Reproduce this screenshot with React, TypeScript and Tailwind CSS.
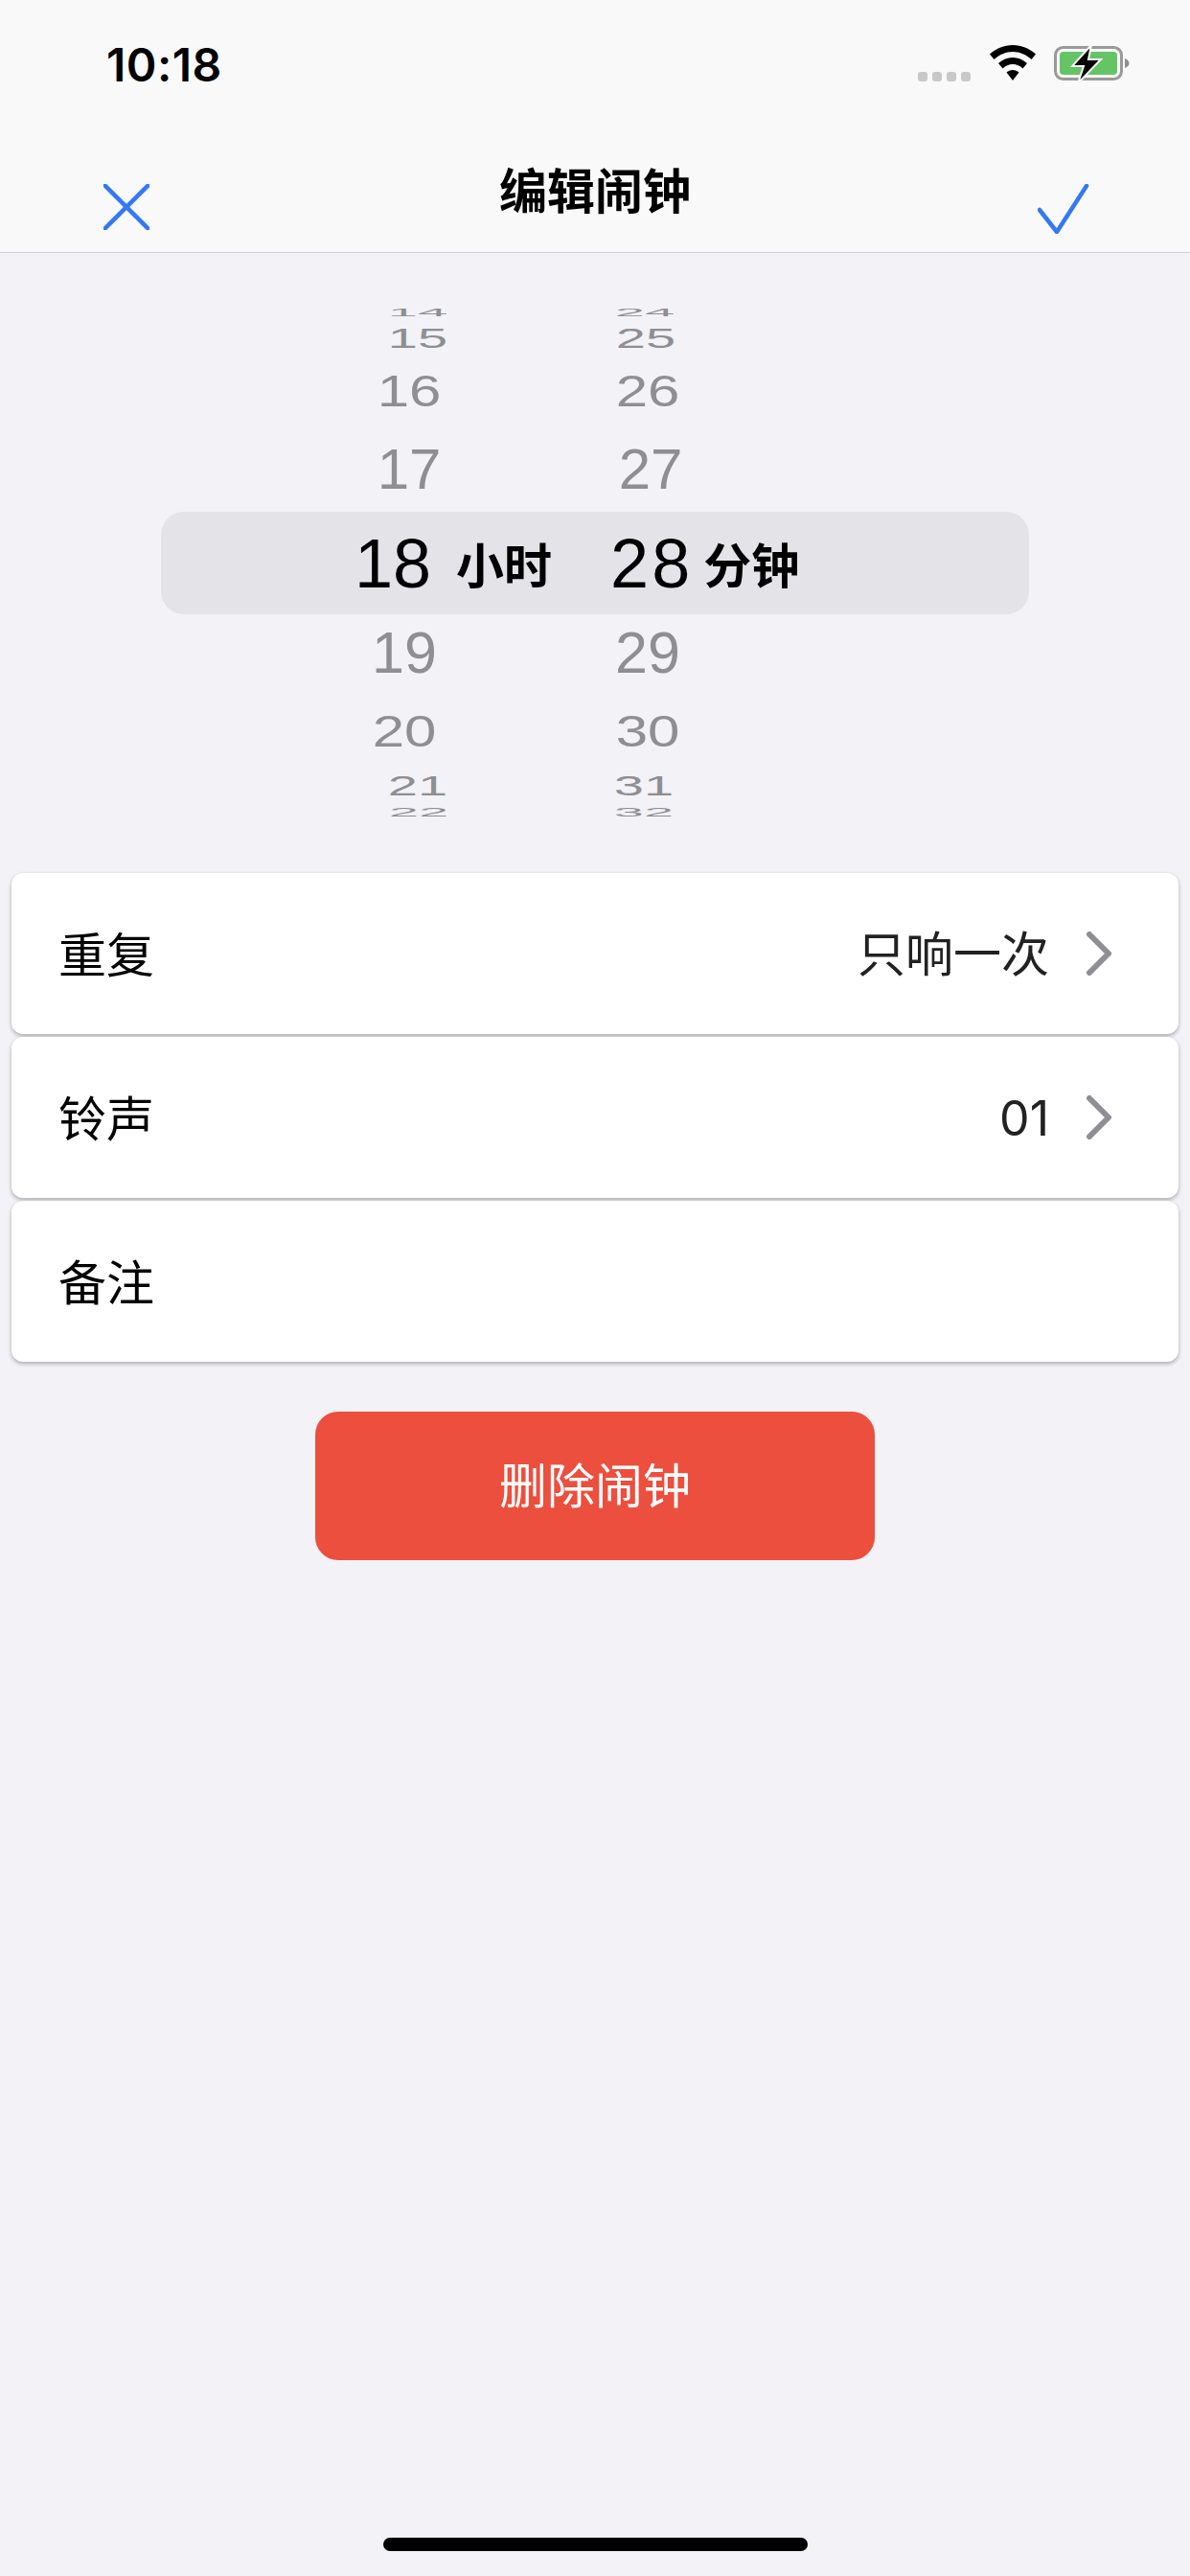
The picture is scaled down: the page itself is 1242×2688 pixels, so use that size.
const wheelRows = [
  { hour: '14', minute: '24', rowClass: 'h-[17px] overflow-hidden', hourClass: 'w-[76px] ml-[398px] scale-y-[0.2]', minuteClass: 'w-[76px] ml-[161px] scale-y-[0.2]', textClass: 'text-[56px]' },
  { hour: '15', minute: '25', rowClass: 'h-[37px]', hourClass: 'w-[76px] ml-[398px] scale-y-[0.52]', minuteClass: 'w-[76px] ml-[162px] scale-y-[0.52]', textClass: 'text-[56px]' },
  { hour: '16', minute: '26', rowClass: 'h-[74px]', hourClass: 'w-[76px] ml-[389px] scale-y-[0.78]', minuteClass: 'w-[76px] ml-[173px] scale-y-[0.78]', textClass: 'text-[60px]' },
  { hour: '17', minute: '27', rowClass: 'h-[89px]', hourClass: 'w-[76px] ml-[389px]', minuteClass: 'w-[76px] ml-[176px]', textClass: 'text-[60px]' },
]

const lowerRows = [
  { hour: '19', minute: '29', rowClass: 'h-[81px]', hourClass: 'w-[76px] ml-[384px]', minuteClass: 'w-[76px] ml-[178px]', textClass: 'text-[61px]' },
  { hour: '20', minute: '30', rowClass: 'h-[82px]', hourClass: 'w-[76px] ml-[384px] scale-y-[0.78]', minuteClass: 'w-[76px] ml-[178px] scale-y-[0.78]', textClass: 'text-[60px]' },
  { hour: '21', minute: '31', rowClass: 'h-[32px]', hourClass: 'w-[76px] ml-[398px] scale-y-[0.52]', minuteClass: 'w-[76px] ml-[160px] scale-y-[0.52]', textClass: 'text-[56px]' },
  { hour: '22', minute: '32', rowClass: 'h-[24px] overflow-hidden', hourClass: 'w-[76px] ml-[399px] scale-y-[0.22]', minuteClass: 'w-[76px] ml-[159px] scale-y-[0.22]', textClass: 'text-[56px]' },
]

type WheelRow = (typeof wheelRows)[number]

function Row({ row }: { row: WheelRow }) {
  return (
    <div className={`flex items-center text-[#8e8e93] font-['Liberation_Sans',sans-serif] leading-none ${row.rowClass} ${row.textClass}`}>
      <span className={`text-center shrink-0 ${row.hourClass}`}>{row.hour}</span>
      <span className={`text-center shrink-0 ${row.minuteClass}`}>{row.minute}</span>
    </div>
  )
}

function ChevronIcon() {
  return (
    <svg width="28" height="46" viewBox="0 0 28 46" fill="none" stroke="#8e8e93" strokeWidth="6" strokeLinecap="round" strokeLinejoin="round" className="mr-[-1px] -mt-[3px]">
      <path d="M4 3L24 23L4 43" />
    </svg>
  )
}

function SettingRow({ label, value }: { label: string; value?: string }) {
  return (
    <div className="h-[168px] mb-[3px] flex items-center pt-[3px] pl-[49px] pr-[70px] bg-white rounded-[12px] shadow-[0_2px_4px_rgba(0,0,0,0.3)]">
      <span className="text-black">{label}</span>
      {value && <span className="ml-auto mr-[38px] -mt-[2px] text-[#222222]">{value}</span>}
      {value && <ChevronIcon />}
    </div>
  )
}

export default function App() {
  return (
    <div className="w-[1242px] h-[2688px] flex flex-col bg-[#f2f2f7] font-['Inter','Noto_Sans_CJK_SC',sans-serif] overflow-hidden">
      {/* Header */}
      <header className="h-[264px] shrink-0 bg-[#f9f9f9] border-b border-[#d2d2d6] flex flex-col">
        <div className="h-[134px] flex items-start pt-[44px] pl-[111px] pr-[62px]">
          <span className="text-[48px] leading-[48px] font-semibold tracking-[0.5px] text-black">10:18</span>
          <div className="ml-auto flex items-start pt-[3px]">
            <div className="flex gap-[5px] mt-[28px] mr-[20px]">
              <span className="w-[10px] h-[10px] rounded-[3px] bg-[#c8c8c8]" />
              <span className="w-[10px] h-[10px] rounded-[3px] bg-[#c8c8c8]" />
              <span className="w-[10px] h-[10px] rounded-[3px] bg-[#c8c8c8]" />
              <span className="w-[10px] h-[10px] rounded-[3px] bg-[#c8c8c8]" />
            </div>
            <svg width="48" height="38" viewBox="0 0 48 38" className="mr-[19px]" fill="black">
              <path d="M24 0C15 0 7 3.500 0 9.500L4.500 15C10 10 16.500 7 24 7C31.500 7 38 10 43.500 15L48 9.500C41 3.500 33 0 24 0Z" />
              <path d="M24 13C18.500 13 13.500 15 9 19L13.500 24.500C16.500 21.500 20 20 24 20C28 20 31.500 21.500 34.500 24.500L39 19C34.500 15 29.500 13 24 13Z" />
              <path d="M24 26C21.500 26 19.500 27 17.500 28.500L24 37L30.500 28.500C28.500 27 26.500 26 24 26Z" />
            </svg>
            <svg width="80" height="40" viewBox="0 0 80 40">
              <rect x="1.500" y="2.500" width="69" height="33" rx="8" fill="none" stroke="#9a9a9a" strokeWidth="3" />
              <rect x="6" y="7" width="60" height="24" rx="4" fill="#65c466" />
              <path d="M74 14C77 15 78.500 17 78.500 19C78.500 21 77 23 74 24Z" fill="#8e8e8e" />
              <path d="M39 0L19 22H31L25 40L49 15H36Z" fill="black" stroke="#f9f9f9" strokeWidth="2" />
            </svg>
          </div>
        </div>
        <div className="relative flex-1 flex items-start justify-between pt-[58px] pl-[108px] pr-[105px]">
          <svg width="48" height="48" viewBox="0 0 48 48" fill="none" stroke="#3478f6" strokeWidth="4.500" strokeLinecap="round">
            <path d="M1 1L47 47M47 1L1 47" />
          </svg>
          <span className="absolute left-0 right-0 top-[38px] text-center text-[50px] leading-[56px] font-bold text-black">编辑闹钟</span>
          <svg width="54" height="52" viewBox="0 0 54 52" fill="none" stroke="#3478f6" strokeWidth="4.500" strokeLinecap="round" strokeLinejoin="round">
            <path d="M2 27L20 50L51 2" />
          </svg>
        </div>
      </header>

      {/* Time picker */}
      <section className="mt-[53px] flex flex-col">
        {wheelRows.map((row) => (
          <Row key={row.hour} row={row} />
        ))}
        <div className="mx-[168px] h-[107px] bg-[#e3e3e8] rounded-[24px] flex items-center text-black">
          <span className="ml-[202px] text-[72px] leading-none font-['Liberation_Sans',sans-serif]">18</span>
          <span className="ml-[26px] mt-[6px] text-[50px] leading-none font-bold">小时</span>
          <span className="ml-[61px] text-[72px] leading-none tracking-[3px] font-['Liberation_Sans',sans-serif]">28</span>
          <span className="ml-[11px] mt-[6px] text-[50px] leading-none font-bold">分钟</span>
        </div>
        {lowerRows.map((row) => (
          <Row key={row.hour} row={row} />
        ))}
      </section>

      {/* Settings */}
      <section className="mt-[51px] px-[12px] flex flex-col text-[50px] leading-none">
        <SettingRow label="重复" value="只响一次" />
        <SettingRow label="铃声" value="01" />
        <SettingRow label="备注" />
      </section>

      <button className="mt-[49px] mx-auto w-[584px] h-[155px] pt-[2px] rounded-[24px] bg-[#ec4f3d] text-white text-[50px]">删除闹钟</button>

      {/* Home indicator */}
      <div className="mt-auto mb-[26px] mx-auto w-[443px] h-[14px] rounded-full bg-black" />
    </div>
  )
}
